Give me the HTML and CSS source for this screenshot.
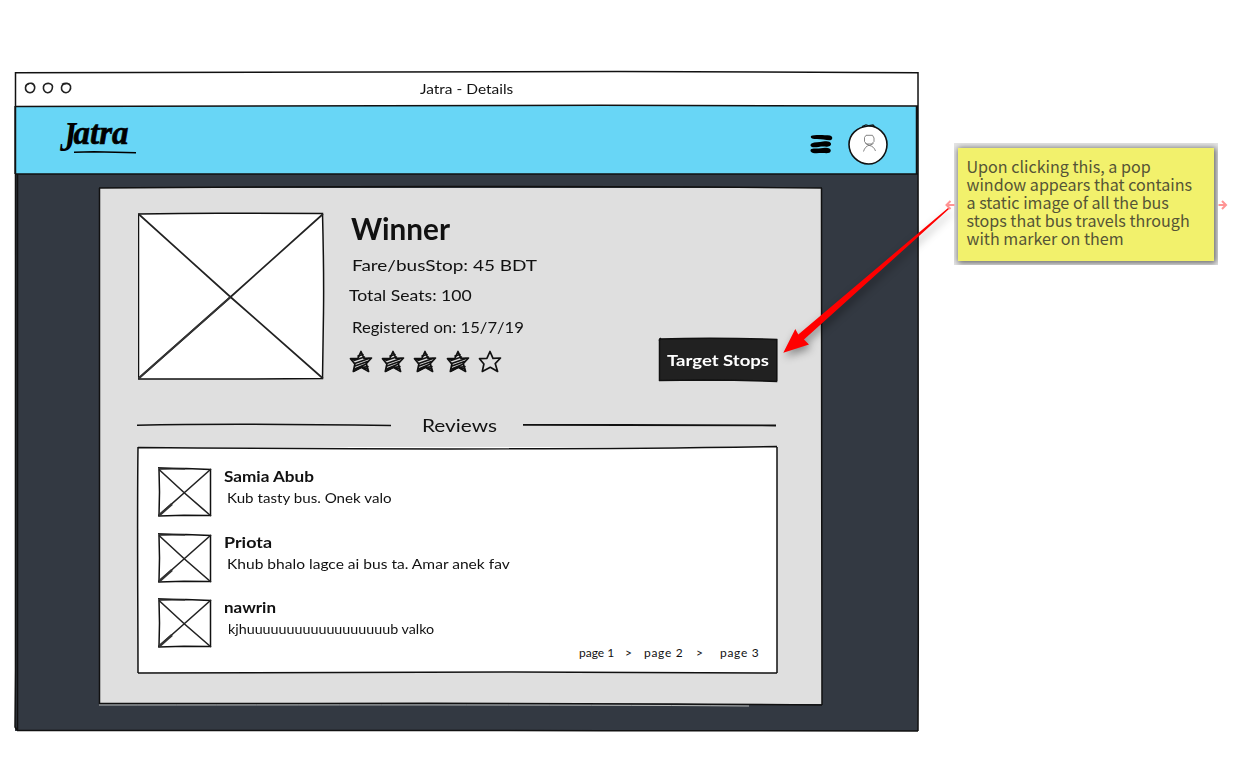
FILE: index.html
```html
<!DOCTYPE html>
<html lang="en">
<head>
<meta charset="utf-8">
<title>Jatra - Details</title>
<link rel="stylesheet" href="styles.css">
</head>
<body>
<svg class="defs" width="0" height="0">
  <defs>
    <symbol id="thumb" viewBox="0 0 54 50" overflow="visible">
      <path d="M1 2 28 1.500 52.500 2.500 52.500 48.500 26 48.300 1 49 1.500 25Z" fill="#fff" stroke="#111" stroke-width="1.500"/>
      <path d="M0 .8 27 1.800M1 2.500 26.500 26 53 49M53 2 26 26 0 49" fill="none" stroke="#222" stroke-width="1.600"/>
      <path d="M1 48.500 14 37" stroke="#333" stroke-width="2.400"/>
    </symbol>
    <symbol id="star" viewBox="0 0 24 23" overflow="visible">
      <path d="M12 1.500 15 8.300 22.500 8 17.200 13.600 19.600 21.500 12.300 17.300 4.300 21.400 5.900 14 1.500 8.700 8.900 8.300Z" fill="none" stroke="#111" stroke-width="1.700" stroke-linejoin="round"/>
    </symbol>
    <symbol id="star-full" viewBox="0 0 24 23" overflow="visible">
      <use href="#star" width="24" height="23"/>
      <path d="M9 6 14 4.500M5 10.500 15.500 7M3 9.500 8 8.700M5.500 13.500 20 8.500M6 16 18.500 11.500M5.500 19 17.500 14M5 21 12 17.500 19 16.500M14.500 18.500 18.500 18.500" fill="none" stroke="#111" stroke-width="1.500" stroke-linecap="round"/>
    </symbol>
  </defs>
</svg>

<main class="window">
  <header class="titlebar">
    <svg class="dots" width="50" height="14" viewBox="0 0 50 14" fill="none" stroke="#222" stroke-width="1.600">
      <path d="M3 3.500C6 1.200 10 2 10.700 6 11 9 9 11.600 6 11.700 3 11.600 1.200 9 1.500 6.500 1.700 4.500 3 3 5 2.600"/>
      <path d="M20 4C23 1.500 28 2 28.500 5.500 28.500 9 26.500 12 23.500 11.800 20.500 11.500 19 8.500 19.500 5.500 20 3.500 22 2.500 24 2.500"/>
      <path d="M38 3.500C41 1.500 45.500 2 46.500 5 47.200 8.500 45 11.700 42 11.700 39 11.600 37.200 9 37.500 6.300 37.700 4.500 39.500 2.500 42.500 2.600"/>
    </svg>
    <span class="hand w-title">Jatra - Details</span>
  </header>
  <nav class="navbar">
    <div class="logo"><span class="logo-j">J</span><span class="logo-rest">atra</span>
      <svg class="logo-line" width="63" height="3" viewBox="0 0 63 3"><path d="M0 1.200 20 .8 62 1.700" fill="none" stroke="#000" stroke-width="1.500"/></svg>
    </div>
    <svg class="menu" width="23" height="20" viewBox="0 0 23 20">
      <path d="M1 2C4 .5 14 1 20 1.500 23 2.300 23 6 20 6.200 15 6 12 5 7 5 3 5 0 4.500 1 2ZM1.500 9.500C5 7.500 9 8.500 13 7.500 17 6.800 20 7 21 9.500 21.500 12.500 18 12.900 14 12.600 10 12.400 6 13.800 3 13.200 0 12.800 0 10.500 1.500 9.500ZM1.500 15C5 13.800 9 15 13 14 17 13.300 20.500 13.600 20.800 16.500 20.500 19.700 17 19.300 13 19.100 9 19 6 19.500 3 18.900 0 18.300 0 15.500 1.500 15Z"/>
    </svg>
    <svg class="avatar" width="42" height="42" viewBox="0 0 42 42">
      <path d="M21 3C31 2.500 40 11 40 21.500 40 32 31.500 41 21.500 41 11 41 2 32 2 21.500 2 11.500 10 4 21 3Z" fill="#fff" stroke="#111" stroke-width="1.600"/>
      <path d="M15 3.600 19 1.800 22 2.700 26 1.800 28 4" fill="none" stroke="#111" stroke-width="1.200"/>
      <path d="M19 12.300H25.500L27 15V18.500L24.500 21H19.500L17.500 18.500V14.500ZM16.500 28.500C17.500 25 19.500 23 22 22.300 25.500 23 27.500 25 28.500 28M18.500 20.500 22.500 22.500 26.500 20.500" fill="none" stroke="#777" stroke-width=".9"/>
    </svg>
  </nav>

  <section class="stage">
    <article class="panel">
      <svg class="sketch" viewBox="0 0 723 516" preserveAspectRatio="none">
        <path d="M0 0C180-1.500 520-2.500 723 0M.5 0C-.5 150 .5 330 .5 516M722.500 0C723.500 160 722 350 723 517M0 515.500C200 516 450 514 723 517" />
        <path class="pale" d="M0 517C200 517 450 516.500 650 518"/>
      </svg>

      <div class="summary">
        <svg class="photo" width="188" height="168" viewBox="0 0 188 168">
          <path d="M.5 2Q60 .8 110 1.300L184.500 1.500Q186 60 185.500 100L184.500 166.500 100 167 .5 167Z" fill="#fff" stroke="#111" stroke-width="1.500"/>
          <path d="M.5 2 92.500 85 185 166.500M185 2 92.500 85 .5 166.500" fill="none" stroke="#222" stroke-width="1.700"/>
          <path d="M.5 166.500 92.500 85" stroke="#333" stroke-width="2"/>
        </svg>
        <div class="info">
          <h1><span class="hand w-name">Winner</span></h1>
          <p class="fare"><span class="hand w-fare">Fare/busStop: 45 BDT</span></p>
          <p class="seats"><span class="hand w-seats">Total Seats: 100</span></p>
          <p class="registered"><span class="hand w-reg">Registered on: 15/7/19</span></p>
          <div class="stars">
            <svg width="24" height="23"><use href="#star-full" width="24" height="23"/></svg>
            <svg width="24" height="23"><use href="#star-full" width="24" height="23"/></svg>
            <svg width="24" height="23"><use href="#star-full" width="24" height="23"/></svg>
            <svg width="24" height="23"><use href="#star-full" width="24" height="23"/></svg>
            <svg width="24" height="23"><use href="#star" width="24" height="23"/></svg>
          </div>
        </div>
        <button class="target" type="button">
          <svg class="sketch" viewBox="0 0 119 42" preserveAspectRatio="none"><path d="M0 0Q60-1.500 119 .5M.5 0V42M118.500 0V42M0 41.500Q60 40 119 42.500M2-1 0 2"/></svg>
          <span class="hand w-target">Target Stops</span>
        </button>
      </div>

      <div class="divider">
        <svg width="254" height="4" viewBox="0 0 254 4"><path d="M0 2.200C60 .8 160 1 254 2.500" fill="none" stroke="#111" stroke-width="1.500"/></svg>
        <h2><span class="hand w-reviews">Reviews</span></h2>
        <svg width="254" height="4" viewBox="0 0 254 4"><path d="M0 1.800 100 2 253 2.500" fill="none" stroke="#111" stroke-width="1.800"/></svg>
      </div>

      <section class="reviews">
        <svg class="sketch" viewBox="0 0 639 226" preserveAspectRatio="none">
          <path d="M0 .5C180 2 430 3 639-.5M0 0C-1 80 0 160 0 226M639 0C639.500 90 638.500 160 639 226M0 226C200 224.500 430 224.500 639 226"/>
        </svg>
        <div class="review">
          <svg class="thumb" width="54" height="50"><use href="#thumb" width="54" height="50"/></svg>
          <div><h3><span class="hand w-r1">Samia Abub</span></h3><p><span class="hand w-c1">Kub tasty bus. Onek valo</span></p></div>
        </div>
        <div class="review">
          <svg class="thumb" width="54" height="50"><use href="#thumb" width="54" height="50"/></svg>
          <div><h3><span class="hand w-r2">Priota</span></h3><p><span class="hand w-c2">Khub bhalo lagce ai bus ta. Amar anek fav</span></p></div>
        </div>
        <div class="review">
          <svg class="thumb" width="54" height="50"><use href="#thumb" width="54" height="50"/></svg>
          <div><h3><span class="hand w-r3">nawrin</span></h3><p><span class="hand w-c3">kjhuuuuuuuuuuuuuuuuuub valko</span></p></div>
        </div>
        <div class="pages">
          <span class="page">page 1</span><span class="sep">&gt;</span><span class="page wide">page 2</span><span class="sep last">&gt;</span><span class="page wide">page 3</span>
        </div>
      </section>
    </article>
  </section>

  <svg class="sketch" viewBox="0 0 903 659" preserveAspectRatio="none">
    <path d="M0 .8C250 0 600-1.800 903 .7M.5 0C-.5 250 2 450 0 655L2 658M903 0C902.500 250 904 450 903 659M2 658.500C200 659.500 600 658 903 659M0 34.500C200 33 600 33 903 34M0 102C200 101.500 600 102.500 903 102M0 34V102M901.500 34V102M2.500 102V658"/>
  </svg>
</main>

<aside class="annotation">
  <svg class="handle" width="10" height="10" viewBox="0 0 10 10"><path d="M9.500 5H2M5.500 1 1.500 5 5.500 9" fill="none" stroke="#ff9494" stroke-width="2"/></svg>
  <div class="halo">
    <p class="note">Upon clicking this, a pop<br>window appears that contains<br>a static image of all the bus<br>stops that bus travels through<br>with marker on them</p>
  </div>
  <svg class="handle" width="10" height="10" viewBox="0 0 10 10"><path d="M.5 5H8M4 1 8 5 4 9" fill="none" stroke="#ff9494" stroke-width="2"/></svg>
</aside>

<svg class="arrow" width="180" height="160" viewBox="0 0 180 160">
  <path d="M8.300 152.700 20.300 129 23.300 134.500 173 8 174 9 29 139.500 34 144.500Z" fill="#f00"/>
</svg>
</body>
</html>
```
FILE: styles.css
```css
* { box-sizing: border-box; }
body {
  margin: 0;
  width: 1258px;
  height: 765px;
  padding: 72px 0 0 15px;
  display: flex;
  align-items: flex-start;
  position: relative;
  overflow: hidden;
  background: #fff;
  color: #111;
  font-family: Lato, sans-serif;
}
h1, h2, h3, p { margin: 0; font-weight: 400; }
svg { display: block; flex: none; }
.defs { position: absolute; }

/* hand-lettered text, widened per label */
.hand {
  display: inline-block;
  white-space: nowrap;
  transform: scaleX(var(--stretch, 1));
  transform-origin: 0 50%;
}
.w-title { --stretch: 1.19; }
.w-name { --stretch: .99; }
.w-fare { --stretch: 1.186; }
.w-seats { --stretch: 1.1; }
.w-reg { --stretch: 1.041; }
.w-target { --stretch: 1.235; }
.w-reviews { --stretch: 1.156; }
.w-r1 { --stretch: 1.071; }
.w-r2 { --stretch: 1.118; }
.w-r3 { --stretch: 1.062; }
.w-c1 { --stretch: 1.165; }
.w-c2 { --stretch: 1.197; }
.w-c3 { --stretch: 1.1; }

/* uneven ink outline laid over a box */
.sketch {
  position: absolute;
  inset: 0;
  width: 100%;
  height: 100%;
  overflow: visible;
  pointer-events: none;
  fill: none;
  stroke: #111;
  stroke-width: 1.5;
}
.sketch .pale { stroke: #b9bcbb; stroke-width: 1; }

.window {
  position: relative;
  flex: none;
  width: 903px;
  height: 659px;
  display: flex;
  flex-direction: column;
}
.titlebar { height: 34px; display: flex; background: #fff; }
.dots { margin: 9px 0 0 8.500px; }
.w-title { margin: 7px 0 0 346.500px; height: 20px; font-size: 13px; line-height: 20px; }

.navbar { height: 68px; display: flex; background: #68d6f6; }
.logo {
  width: 92px;
  height: 50px;
  margin-left: 43px;
  padding: 6px 0 0 2px;
  position: relative;
  color: #000;
  font: italic 700 33px/42px "Liberation Serif", serif;
  white-space: nowrap;
}
.logo-j { display: inline-block; transform: translateY(4px) scaleY(1.27); }
.logo-rest { display: inline-block; margin-left: -3px; -webkit-text-stroke: .6px #000; }
.logo-line { position: absolute; left: 16px; top: 45px; }
.menu { margin: 28px 0 0 660px; }
.avatar { margin: 17px 0 0 14px; }

.stage { flex: 1; padding: 14px 0 0 84px; background: #333942; }
.panel {
  position: relative;
  width: 723px;
  height: 516px;
  padding: 24px 45px 0 39px;
  background: #dfdfdf;
}
.summary { display: flex; height: 170px; }
.info { width: 220px; margin-left: 23px; }
h1 { height: 38px; margin-top: -1px; padding-left: 2px; font-size: 30px; line-height: 34px; font-weight: 700; }
.info p { height: 30px; font-size: 16px; line-height: 31px; padding-left: 3px; }
.info .seats { padding-left: 0; height: 32px; }
.stars { display: flex; gap: 8.200px; padding-top: 9px; }
.target {
  position: relative;
  width: 119px;
  height: 42px;
  margin: 127px 0 0 91px;
  padding: 0 0 0 8px;
  border: 0;
  background: #212121;
  color: #fff;
  font: 700 15px/38px Lato, sans-serif;
  text-align: left;
}
.divider { display: flex; align-items: center; margin: 30px 0 0 -1px; height: 26px; }
h2 { width: 134px; padding-left: 31px; font-size: 18px; line-height: 26px; }

.reviews {
  position: relative;
  width: 639px;
  height: 226px;
  margin: 9px 0 0;
  padding: 20px 0 0 19.500px;
  background: #fff;
}
.review { display: flex; gap: 12.500px; height: 65.500px; }
h3 { font-size: 16px; line-height: 18px; font-weight: 700; }
.review p { font-size: 13px; line-height: 27px; padding-left: 3px; }
.review:nth-of-type(3) p { padding-left: 4px; }
.pages { display: flex; margin: -21px 0 0 421.500px; font-size: 12px; line-height: 20px; }
.page { width: 46px; white-space: nowrap; }
.page.wide { width: 52px; letter-spacing: .7px; }
.sep { width: 19px; }
.sep.last { width: 24px; }

.annotation { display: flex; align-items: center; flex: none; margin: 71px 0 0 27px; }
.halo { width: 264px; height: 122px; padding: 5px 4px 4px 3.500px; background: #e6e6e6; overflow: hidden; }
.note {
  width: 256px;
  height: 112.500px;
  padding: 9px 0 0 9px;
  background: #f2f16c;
  box-shadow: 1px 1px 6px 1px #666;
  color: #555436;
  font: 16.100px/18px "Noto Sans CJK JP", sans-serif;
  white-space: nowrap;
}
.handle { position: relative; top: 1px; }
.handle:first-child { margin-right: -1px; }
.arrow {
  position: absolute;
  left: 775px;
  top: 200px;
  filter: drop-shadow(2px 4px 4px rgba(0, 0, 0, .4));
}
```
